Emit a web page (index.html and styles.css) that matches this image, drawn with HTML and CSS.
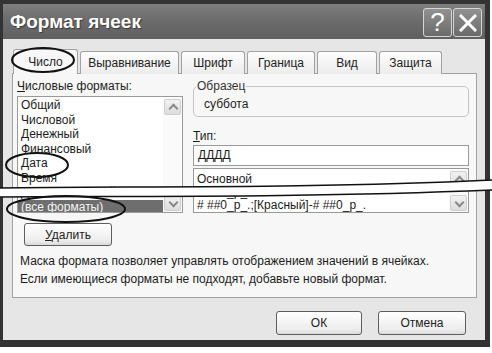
FILE: index.html
```html
<!DOCTYPE html>
<html lang="ru">
<head>
  <meta charset="UTF-8">
  <title>Формат ячеек</title>
  <link rel="stylesheet" href="styles.css">
</head>
<body>
  <div class="page">
    <div class="window">
      <div class="titlebar">
        <span class="title">Формат ячеек</span>
        <div class="title-buttons">
          <span class="tbtn">?</span>
          <span class="tbtn">
            <svg width="18" height="18" viewBox="0 0 18 18"><path d="M2 2 L16 16 M16 2 L2 16" stroke="#fff" stroke-width="3" stroke-linecap="square"/></svg>
          </span>
        </div>
      </div>

      <div class="main">
        <div class="tabs">
          <div class="tab active w1">Число</div>
          <div class="tab w2">Выравнивание</div>
          <div class="tab w3">Шрифт</div>
          <div class="tab w4">Граница</div>
          <div class="tab w5">Вид</div>
          <div class="tab w6">Защита</div>
        </div>

        <div class="panel">
          <div class="cols">
            <div class="left">
              <div class="label"><u>Ч</u>исловые форматы:</div>
              <div class="listbox formats">
                <ul class="items">
                  <li>Общий</li>
                  <li>Числовой</li>
                  <li>Денежный</li>
                  <li>Финансовый</li>
                  <li>Дата</li>
                  <li>Время</li>
                  <li>Дополнительный</li>
                  <li class="selected">(все форматы)</li>
                </ul>
                <div class="scrollbar">
                  <span class="sbtn up"></span>
                  <span class="sbtn down"></span>
                </div>
              </div>
            </div>

            <div class="right">
              <fieldset class="sample">
                <legend>Образец</legend>
                <div class="sample-value">суббота</div>
              </fieldset>
              <div class="label type-label"><u>Т</u>ип:</div>
              <div class="input">ДДДД</div>
              <div class="listbox types">
                <ul class="items">
                  <li>Основной</li>
                  <li># ##0_р_.</li>
                  <li># ##0_р_.;[Красный]-# ##0_р_.</li>
                </ul>
                <div class="scrollbar">
                  <span class="sbtn up"></span>
                  <span class="sbtn down"></span>
                </div>
              </div>
            </div>
          </div>

          <button class="btn delete"><u>У</u>далить</button>

          <p class="hint">Маска формата позволяет управлять отображением значений в ячейках.<br>Если имеющиеся форматы не подходят, добавьте новый формат.</p>
        </div>

        <div class="footer">
          <button class="btn ok">ОК</button>
          <button class="btn cancel">Отмена</button>
        </div>
      </div>
    </div>

    <!-- пометки поверх скриншота: разрыв и обводки -->
    <svg class="marks" width="492" height="353" viewBox="0 0 492 353">
      <path d="M0 188 C120 186 300 189 492 180 L492 190 C300 198 120 196 0 197 Z" fill="#fff"/>
      <path d="M0 188 C120 186 300 189 492 180" fill="none" stroke="#111" stroke-width="1.5"/>
      <path d="M0 197 C120 196 300 198 492 190" fill="none" stroke="#111" stroke-width="1.5"/>
      <ellipse cx="43" cy="60" rx="31" ry="12" fill="none" stroke="#111" stroke-width="2"/>
      <ellipse cx="37" cy="165" rx="31" ry="12" fill="none" stroke="#111" stroke-width="2"/>
      <ellipse cx="66" cy="209" rx="59" ry="13" fill="none" stroke="#111" stroke-width="2"/>
    </svg>
  </div>
</body>
</html>
```

FILE: styles.css
```css
* {
  box-sizing: border-box;
}
body {
  margin: 0;
  background: #fff;
  font-family: "Liberation Sans", Arial, sans-serif;
  font-size: 12px;
  color: #1c1c1c;
}
.page {
  position: relative;
  width: 492px;
  height: 353px;
}
.window {
  width: 490px;
  height: 347px;
  border-style: solid;
  border-color: #333;
  border-width: 4px 5px 7px 3px;
  background: #e6e6e6;
  display: flex;
  flex-direction: column;
}
.titlebar {
  height: 35px;
  flex: none;
  display: flex;
  align-items: center;
  justify-content: space-between;
  padding: 0 3px 0 7px;
  background: linear-gradient(#7e7e7e, #6c6c6c 45%, #606060);
}
.title {
  color: #fff;
  font-size: 19px;
  font-weight: bold;
  text-shadow: 1px 1px 1px #3a3a3a;
}
.title-buttons {
  display: flex;
  gap: 1px;
  margin-top: 2px;
}
.tbtn {
  width: 29px;
  height: 29px;
  border: 1px solid #d6d6d6;
  border-radius: 3px;
  background: linear-gradient(#929292, #6a6a6a);
  color: #fff;
  display: flex;
  align-items: center;
  justify-content: center;
  font-size: 26px;
}
.main {
  flex: 1;
  padding: 12px 0 0 9px;
}
.tabs {
  display: flex;
  gap: 2px;
  padding-left: 1px;
  height: 23px;
  margin-bottom: -1px;
  position: relative;
}
.tab {
  height: 23px;
  border: 1px solid #a2a2a2;
  border-bottom: none;
  border-radius: 3px 3px 0 0;
  background: linear-gradient(#fdfdfd, #ececec);
  display: flex;
  align-items: center;
  justify-content: center;
  color: #222;
}
.tab.active {
  height: 25px;
  margin-top: -2px;
  background: #f7f7f7;
}
.w1 { width: 65px; }
.w2 { width: 99px; }
.w3 { width: 64px; }
.w4 { width: 68px; }
.w5 { width: 60px; }
.w6 { width: 63px; }
.panel {
  width: 465px;
  height: 225px;
  border: 1px solid #a2a2a2;
  background: #f7f7f7;
  padding: 5px 7px 0 4px;
}
.cols {
  display: flex;
  gap: 10px;
}
.left {
  width: 166px;
}
.right {
  flex: 1;
}
.label {
  line-height: 14px;
  height: 14px;
}
.listbox {
  display: flex;
  background: #fff;
  border: 1px solid #9a9a9a;
  overflow: hidden;
}
.formats {
  height: 117px;
  margin-top: 3px;
}
.items {
  flex: 1;
  list-style: none;
  margin: 0;
  padding: 0;
  overflow: hidden;
  white-space: nowrap;
}
.formats .items {
  padding-top: 1px;
  line-height: 14.5px;
}
.formats li {
  padding-left: 3px;
}
.selected {
  background: #6e6e6e;
  color: #f4f4f4;
}
.scrollbar {
  width: 19px;
  display: flex;
  flex-direction: column;
  justify-content: space-between;
  padding: 2px 1px 1px 1px;
  background: #fafafa;
}
.sbtn {
  height: 16px;
  border: 1px solid #cfcfcf;
  border-radius: 2px;
  background: linear-gradient(#f2f2f2, #dcdcdc);
  position: relative;
}
.sbtn::after {
  content: "";
  position: absolute;
  left: 5px;
  width: 5px;
  height: 5px;
  border-left: 2px solid #8a8a8a;
  border-top: 2px solid #8a8a8a;
}
.sbtn.up::after {
  top: 5px;
  transform: rotate(45deg);
}
.sbtn.down::after {
  top: 3px;
  transform: rotate(-135deg);
}
.sample {
  margin: 0;
  height: 38px;
  padding: 1px 0 0 2px;
  border: 1px solid #c4c4c4;
  border-radius: 5px;
}
.sample legend {
  padding: 0 1px;
  line-height: 14px;
  color: #333;
}
.sample-value {
  padding-left: 8px;
  line-height: 14px;
  margin-top: 3px;
}
.type-label {
  margin-top: 12px;
}
.input {
  margin-top: 2px;
  height: 21px;
  border: 1px solid #9a9a9a;
  background: #fff;
  padding-left: 4px;
  line-height: 19px;
}
.types {
  margin-top: 2px;
  height: 45px;
}
.types .items {
  padding: 4px 0 0 3px;
  line-height: 13px;
}
.btn {
  font-family: inherit;
  font-size: 12px;
  color: #222;
  height: 24px;
  border: 1px solid #5e5e5e;
  border-radius: 3px;
  background: linear-gradient(#ffffff, #ececec 80%, #dadada);
  padding: 0;
}
.delete {
  display: block;
  width: 88px;
  height: 23px;
  margin: 10px 0 0 7px;
}
.hint {
  margin: 6px 0 0 3px;
  line-height: 18px;
}
.footer {
  display: flex;
  justify-content: flex-end;
  gap: 16px;
  padding: 13px 19px 0 0;
}
.ok {
  width: 86px;
}
.cancel {
  width: 88px;
}
.marks {
  position: absolute;
  left: 0;
  top: 0;
  pointer-events: none;
}
```
